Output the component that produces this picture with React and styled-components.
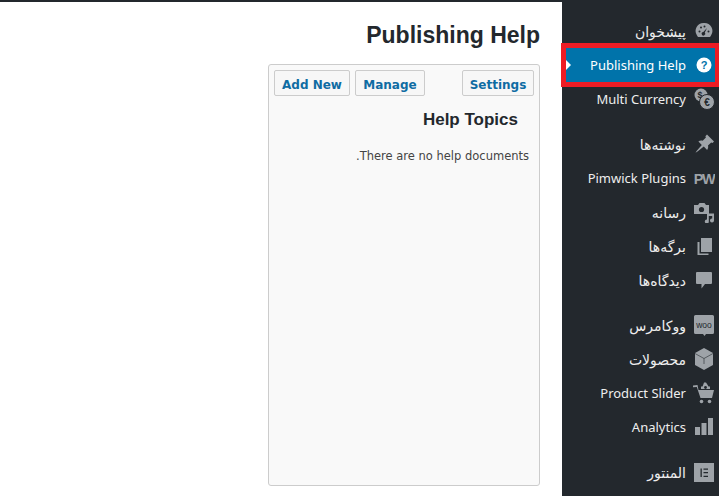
import React from "react";
import styled, { createGlobalStyle } from "styled-components";

const GlobalStyle = createGlobalStyle`
  html, body {
    margin: 0;
    padding: 0;
    background: #fff;
  }
  body {
    font-family: "DejaVu Sans", sans-serif;
    overflow: hidden;
  }
`;

const Page = styled.div`
  display: flex;
  width: 719px;
  height: 496px;
  overflow: hidden;
`;

const Main = styled.main`
  flex: 1;
  border-top: 2px solid #23282d;
  padding: 18px 22px 0 268px;
  box-sizing: border-box;
`;

const Title = styled.h1`
  margin: 0 0 14px;
  font: bold 23px/30px "Liberation Sans", sans-serif;
  color: #23282d;
  text-align: right;
`;

const Panel = styled.section`
  box-sizing: border-box;
  height: 422px;
  padding: 5px;
  background: #f9f9f9;
  border: 1px solid #ccc;
  border-radius: 3px;
`;

const Tabs = styled.div`
  display: flex;
  gap: 5px;
`;

const TabButton = styled.button`
  box-sizing: border-box;
  height: 26px;
  width: ${(p) => p.$w}px;
  margin-left: ${(p) => (p.$push ? "auto" : 0)};
  padding: 3px 0 0;
  background: #f7f7f7;
  border: 1px solid #ccc;
  border-radius: 2px;
  color: #0f6ca3;
  font: bold 12px "DejaVu Sans", sans-serif;
`;

const Topic = styled.h2`
  margin: 14px 16px 0 0;
  font: bold 17px/20px "Liberation Sans", sans-serif;
  color: #23282d;
  text-align: right;
`;

const Empty = styled.p`
  margin: 18px 5px 0 0;
  font-size: 11.5px;
  line-height: 16px;
  color: #444;
  text-align: right;
`;

const Sidebar = styled.nav`
  flex: none;
  width: 157px;
  height: 496px;
  padding-top: 14px;
  box-sizing: border-box;
  background: #23282d;
`;

const Item = styled.div`
  position: relative;
  display: flex;
  align-items: center;
  justify-content: flex-end;
  gap: 7px;
  height: 34px;
  margin-top: ${(p) => (p.$gap ? "11px" : 0)};
  padding-right: 4px;
  color: ${(p) => (p.$active ? "#fff" : "#eee")};
  font: 13px "Noto Sans", "DejaVu Sans", sans-serif;
  white-space: nowrap;
  ${(p) =>
    p.$active &&
    `
    margin-left: 4px;
    margin-right: 4px;
    padding-right: 0;
    background: #0073aa;
    &::before {
      content: "";
      position: absolute;
      left: 0;
      top: 12px;
      border: 5px solid transparent;
      border-left-color: #fff;
      border-right-width: 0;
    }
    &::after {
      content: "";
      position: absolute;
      inset: -5px -4px -5px -5px;
      border: 5px solid #ed1c24;
      border-right-width: 4px;
    }
  `}
`;

const Label = styled.span`
  display: block;
  font-size: ${(p) => (p.$fa ? "14px" : "13px")};
`;

const Icon = styled.svg`
  flex: none;
  width: 22px;
  height: 22px;
  fill: ${(p) => (p.$active ? "#fff" : "#9ea3a8")};
`;

const Dark = "#23282d";

const icons = {
  gauge: (
    <>
      <path d="M11 3a8 8 0 0 0-7 12.500l1 1.500h12l1-1.500A8 8 0 0 0 11 3z" />
      <g fill={Dark}>
        <circle cx="6.500" cy="11.500" r="1" />
        <circle cx="8" cy="7.500" r="1" />
        <circle cx="11.500" cy="6.500" r="1" />
        <circle cx="15.500" cy="11.500" r="1" />
        <path d="M14 8 11.800 12.500a1.800 1.800 0 1 1-1.500-.6z" />
      </g>
    </>
  ),
  help: (
    <>
      <circle cx="11" cy="11" r="7.500" />
      <text x="11" y="15" textAnchor="middle" fontSize="11" fontWeight="700" fontFamily="Liberation Sans" fill="#0073aa">?</text>
    </>
  ),
  currency: (
    <>
      <circle cx="8" cy="7" r="6.500" />
      <text x="7" y="10" textAnchor="middle" fontSize="9" fontWeight="700" fontFamily="Liberation Sans" fill={Dark}>$</text>
      <circle cx="14" cy="14" r="7.500" stroke={Dark} strokeWidth="1" />
      <text x="14" y="17.500" textAnchor="middle" fontSize="10" fontWeight="700" fontFamily="Liberation Sans" fill={Dark}>€</text>
    </>
  ),
  pin: <path d="M14 1.500 21 8.500l-1.500 1.400-1.300-.5-3.200 3.200c.4 1.700.2 3.100-.9 4.300l-3.300-3.400L4.500 18.500 2.500 19.800l1.300-2.100 5-5.800-3.400-3.300c1.200-1.100 2.600-1.300 4.300-.9l3.200-3.200-.5-1.300z" />,
  pw: (
    <text x="11" y="16.500" textAnchor="middle" fontSize="14.500" fontWeight="700" fontFamily="Liberation Sans" letterSpacing="-1.500">PW</text>
  ),
  media: (
    <>
      <path d="M1 4h4l1.500-2h5L13 4h3v9H1z" />
      <circle cx="8.500" cy="8.500" r="2.600" fill={Dark} />
      <path d="M14 12.500h7v7a2 2 0 1 1-1.800-2V15h-3.400v5.500a2 2 0 1 1-1.800-2z" />
    </>
  ),
  pages: (
    <>
      <path d="M8 3h11v14H8z" />
      <path d="M4.500 7H6.500v11.500h9v1.500h-11z" />
    </>
  ),
  comment: <path d="M4 3h14a1 1 0 0 1 1 1v10a1 1 0 0 1-1 1h-6l-3.500 4.500V15H4a1 1 0 0 1-1-1V4a1 1 0 0 1 1-1z" />,
  woo: (
    <>
      <path d="M2.500 1h17A1.500 1.500 0 0 1 21 2.500v16a1.500 1.500 0 0 1-1.500 1.500H13l-1.500 2-1.500-2H2.500A1.500 1.500 0 0 1 1 18.500v-16A1.500 1.500 0 0 1 2.500 1z" />
      <text x="11" y="13.500" textAnchor="middle" fontSize="8.500" fontFamily="Liberation Sans" fill={Dark}>woo</text>
    </>
  ),
  box: (
    <>
      <path d="M11 0 20 5v12l-9 5-9-5V5z" />
      <path d="M2 5.500 11 10.500l9-5M11 10.500V16" fill="none" stroke={Dark} strokeWidth=".6" />
    </>
  ),
  cart: (
    <>
      <path d="M0 3.500 4.500 3 5.500 8H21l-2 8H7.500L3.800 5 0 5.200z" />
      <circle cx="8.500" cy="19.500" r="1.800" />
      <circle cx="16.500" cy="19.500" r="1.800" />
      <path d="M8 7V4.500h1.500L10.500 2 11 .5h2L14 2l1.500 2.500H17V7z" />
      <circle cx="12.500" cy="5.500" r="1.400" fill={Dark} />
    </>
  ),
  bars: (
    <>
      <path d="M2 11h5v8H2z" />
      <path d="M8.500 7h5v12h-5z" />
      <path d="M15 2h5v17h-5z" />
    </>
  ),
  elementor: (
    <path fillRule="evenodd" d="M1 2h20v19H1zM7.500 7.500v8.500h1.300V7.500zM10.500 7.500v1.300H15V7.500zM10.500 11v1.300H15V11zM10.500 14.700V16H15v-1.300z" />
  ),
};

const items = [
  { label: "پیشخوان", icon: "gauge", fa: true },
  { label: "Publishing Help", icon: "help", active: true },
  { label: "Multi Currency", icon: "currency" },
  { label: "نوشته‌ها", icon: "pin", gap: true, fa: true },
  { label: "Pimwick Plugins", icon: "pw" },
  { label: "رسانه", icon: "media", fa: true },
  { label: "برگه‌ها", icon: "pages", fa: true },
  { label: "دیدگاه‌ها", icon: "comment", fa: true },
  { label: "ووکامرس", icon: "woo", gap: true, fa: true },
  { label: "محصولات", icon: "box", fa: true },
  { label: "Product Slider", icon: "cart" },
  { label: "Analytics", icon: "bars" },
  { label: "المنتور", icon: "elementor", gap: true, fa: true },
];

const App = () => {
  return (
    <Page>
      <GlobalStyle />
      <Main>
        <Title>Publishing Help</Title>
        <Panel>
          <Tabs>
            <TabButton $w={76}>Add New</TabButton>
            <TabButton $w={70}>Manage</TabButton>
            <TabButton $w={72} $push>Settings</TabButton>
          </Tabs>
          <Topic>Help Topics</Topic>
          <Empty>.There are no help documents</Empty>
        </Panel>
      </Main>
      <Sidebar>
        {items.map((item) => (
          <Item key={item.label} $active={item.active} $gap={item.gap}>
            <Label $fa={item.fa}>{item.label}</Label>
            <Icon viewBox="0 0 22 22" $active={item.active}>{icons[item.icon]}</Icon>
          </Item>
        ))}
      </Sidebar>
    </Page>
  );
};

export default App;
